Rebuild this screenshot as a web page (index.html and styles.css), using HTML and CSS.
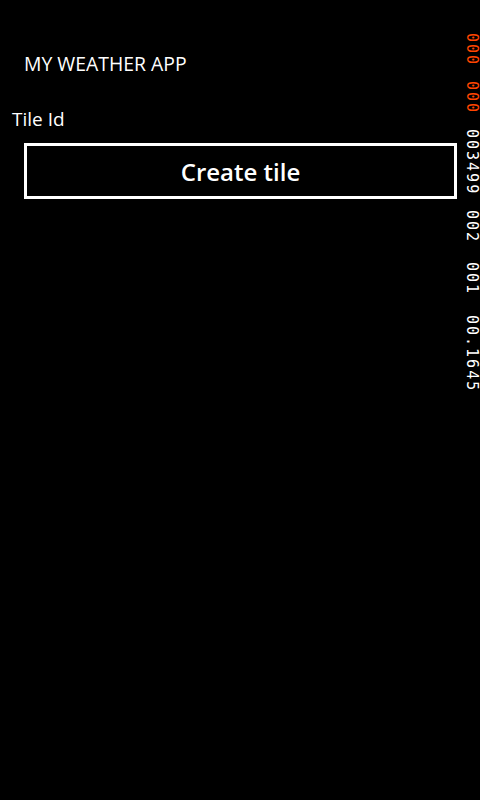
FILE: index.html
```html
<!DOCTYPE html>
<html>
<head>
<meta charset="utf-8">
<link rel="stylesheet" href="styles.css">
</head>
<body>
<div class="screen">
  <main class="page">
    <div class="app-title">MY WEATHER APP</div>
    <div class="label">Tile Id</div>
    <button class="btn">Create tile</button>
  </main>
  <aside class="counters">
    <span class="grp orange">000</span>
    <span class="grp orange">000</span>
    <span class="grp">003499</span>
    <span class="grp">002</span>
    <span class="grp gap-lg">001</span>
    <span class="grp">00.1645</span>
  </aside>
</div>
</body>
</html>
```
FILE: styles.css
```css
html, body {
  margin: 0;
  padding: 0;
  background: #000;
  color: #fff;
  font-family: "Open Sans", "Noto Sans", sans-serif;
}
.screen {
  width: 480px;
  height: 800px;
  display: flex;
  justify-content: space-between;
}
.page {
  flex: 1;
  display: flex;
  flex-direction: column;
  align-items: flex-start;
  padding: 50px 0 0 0;
}
.app-title {
  font-size: 19.4px;
  line-height: 28px;
  margin-left: 24px;
}
.label {
  margin-top: 29px;
  margin-left: 12px;
  font-size: 19px;
  line-height: 24px;
}
.btn {
  margin-top: 12px;
  margin-left: 24px;
  width: 433px;
  height: 56px;
  background: #000;
  border: 3px solid #fff;
  color: #fff;
  font-family: "Open Sans", "Noto Sans", sans-serif;
  font-weight: 600;
  font-size: 24px;
  padding: 0;
}
.counters {
  width: 16px;
  padding-top: 33px;
  display: flex;
  flex-direction: column;
  align-items: flex-end;
  gap: 15px;
}
.grp {
  writing-mode: vertical-rl;
  font-family: "DejaVu Sans Mono", monospace;
  font-size: 15px;
  line-height: 16px;
  letter-spacing: 2px;
  color: #fff;
}
.grp.orange { color: #ff4500; }
.grp.gap-lg { margin-top: 4px; margin-bottom: 4px; }
```
